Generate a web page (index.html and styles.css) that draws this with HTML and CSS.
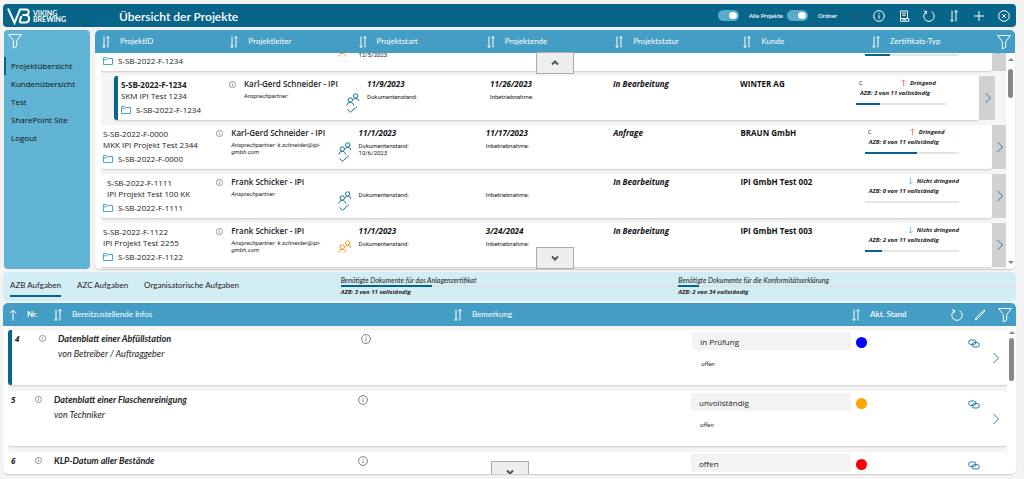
FILE: index.html
```html
<!DOCTYPE html>
<html lang="de">
<head>
<meta charset="utf-8">
<meta name="viewport" content="width=device-width, initial-scale=1">
<title>Übersicht der Projekte</title>
<link rel="stylesheet" href="styles.css">
</head>
<body>
<svg class="sprite" aria-hidden="true">
  <symbol id="sort" viewBox="0 0 8 12"><path d="M2 .5v11M.3 9.700 2 11.500l1.700-1.800M6 11.500V.5M4.300 2.300 6 .5l1.700 1.800"/></symbol>
  <symbol id="up" viewBox="0 0 8 12"><path d="M4 11.500V1M.8 4.200 4 1l3.200 3.200"/></symbol>
  <symbol id="info" viewBox="0 0 12 12"><circle cx="6" cy="6" r="5.300"/><path d="M6 5.200v3.600M6 3v1.200"/></symbol>
  <symbol id="funnel" viewBox="0 0 16 16"><path d="M1.500 1.500h13L9.700 7.500v5.700L6.300 15V7.500z"/></symbol>
  <symbol id="doc" viewBox="0 0 12 12"><path d="M2.500 1h7v7.500M2.500 1v10.200h8.300V8.500H2.500M4.200 3.200h3.600M4.200 5.200h3.600M4.500 9.800h4"/></symbol>
  <symbol id="refresh" viewBox="0 0 12 12"><path d="M3.500 1.600A5.200 5.200 0 1 0 8.500 1.600M1 .9l2.700.6-.7 2.700"/></symbol>
  <symbol id="plus" viewBox="0 0 12 12"><path d="M6 1v10M1 6h10"/></symbol>
  <symbol id="close" viewBox="0 0 12 12"><circle cx="6" cy="6" r="5.300"/><path d="m4 4 4 4M8 4 4 8"/></symbol>
  <symbol id="pencil" viewBox="0 0 12 12"><path d="m1.200 10.800.6-1.800 8.300-8 .9.900-8 8.300z"/></symbol>
  <symbol id="folder" viewBox="0 0 10 8"><path d="M.5 7.500v-7h3l1 1h5v6zM.5 2.800h3.200l.8-1.300"/></symbol>
  <symbol id="people" viewBox="0 0 14 13"><circle cx="9.700" cy="3" r="2.200"/><path d="M7.300 6.800c.8-1.800 4.700-2.400 5.600 1.200"/><circle cx="4.300" cy="7" r="2.200"/><path d="M.8 12.500c.4-4.200 6.500-4.200 7 0"/></symbol>
  <symbol id="check" viewBox="0 0 14 7"><path d="m1.500 3.500 3 2.800L11 .5"/></symbol>
  <symbol id="right" viewBox="0 0 8 12"><path d="m1.500 1 5 5-5 5"/></symbol>
  <symbol id="chev-up" viewBox="0 0 8 6"><path d="m1 4.500 3-3 3 3"/></symbol>
  <symbol id="chev-down" viewBox="0 0 8 6"><path d="m1 1.500 3 3 3-3"/></symbol>
  <symbol id="link" viewBox="0 0 12 9"><rect x=".6" y="1" width="7.400" height="4.400" rx="2.200"/><rect x="4" y="3.600" width="7.400" height="4.400" rx="2.200"/></symbol>
</svg>

<div class="app">
  <header class="topbar">
    <div class="brand">
      <svg class="brand-mark" viewBox="0 0 24 18" aria-hidden="true"><path d="M1 1.500 7.500 16 13 2.500h6.500c3 0 3 5.500-.5 5.500h-3.500M19 8c4.500.3 4 7.500-.5 7.500h-4.500q-1.500 0-1-2.500l1.500-4"/></svg>
      <span class="brand-name">VIKING<br>BREWING</span>
    </div>
    <h1>Übersicht der Projekte</h1>
    <label class="toggle"><input type="checkbox" role="switch" checked><span>Alle Projekte</span></label>
    <label class="toggle"><input type="checkbox" role="switch" checked><span>Ordner</span></label>
    <nav class="tools" aria-label="Werkzeuge">
      <button class="dim" aria-label="Hinweis" disabled><svg class="icon"><use href="#info"/></svg></button>
      <button aria-label="Information"><svg class="icon"><use href="#info"/></svg></button>
      <button aria-label="Bericht"><svg class="icon"><use href="#doc"/></svg></button>
      <button aria-label="Aktualisieren"><svg class="icon"><use href="#refresh"/></svg></button>
      <button aria-label="Sortieren"><svg class="icon"><use href="#sort"/></svg></button>
      <button aria-label="Neu"><svg class="icon"><use href="#plus"/></svg></button>
      <button aria-label="Schließen"><svg class="icon"><use href="#close"/></svg></button>
    </nav>
  </header>

  <main class="upper">
    <aside class="sidebar">
      <button class="filter" aria-label="Filter"><svg class="funnel"><use href="#funnel"/></svg></button>
      <nav>
        <a class="current" href="#">Projektübersicht</a>
        <a href="#">Kundenübersicht</a>
        <a href="#">Test</a>
        <a href="#">SharePoint Site</a>
        <a href="#">Logout</a>
      </nav>
    </aside>

    <section class="panel projects" aria-label="Projekte">
      <div class="panel-head project-head">
        <button><svg class="sort"><use href="#sort"/></svg>ProjektID</button>
        <button><svg class="sort"><use href="#sort"/></svg>Projektleiter</button>
        <button><svg class="sort"><use href="#sort"/></svg>Projektstart</button>
        <button><svg class="sort"><use href="#sort"/></svg>Projektende</button>
        <button><svg class="sort"><use href="#sort"/></svg>Projektstatur</button>
        <button><svg class="sort"><use href="#sort"/></svg>Kunde</button>
        <button><svg class="sort"><use href="#sort"/></svg>Zertifikats-Typ</button>
        <button class="filter" aria-label="Filter"><svg class="funnel"><use href="#funnel"/></svg></button>
      </div>
      <div class="scroll-area">
        <ul class="project-list">
          <li class="project">
            <div class="card">
              <div class="cell id-cell"><div class="ids"><p></p><p></p><p class="folder"><svg><use href="#folder"/></svg>S-SB-2022-F-1234</p></div></div>
              <div class="cell lead-cell"><div></div><span class="people pending"><svg><use href="#people"/></svg></span></div>
              <div class="cell"><p class="strong"></p><p class="note"><br>12/5/2023</p></div>
              <div class="cell"></div><div class="cell"></div><div class="cell"></div>
              <div class="cell cert"><p class="urgency"></p><p class="count"></p><div class="bar"><i style="width:27%"></i></div></div>
            </div>
            <button class="open" aria-label="Öffnen"><svg><use href="#right"/></svg></button>
          </li>
          <li class="project selected">
            <div class="card">
              <div class="cell id-cell"><div class="ids"><p><b>S-SB-2022-F-1234</b></p><p>SKM IPI Test 1234</p><p class="folder"><svg><use href="#folder"/></svg>S-SB-2022-F-1234</p></div><svg class="mini-info"><use href="#info"/></svg></div>
              <div class="cell lead-cell"><div><p class="lead">Karl-Gerd Schneider - IPI</p><p class="contact">Ansprechpartner:</p></div><span class="people"><svg><use href="#people"/></svg><svg class="check"><use href="#check"/></svg></span></div>
              <div class="cell"><p class="strong">11/9/2023</p><p class="note">Dokumentenstand:</p></div>
              <div class="cell"><p class="strong">11/26/2023</p><p class="note">Inbetriebnahme:</p></div>
              <div class="cell"><p class="strong">In Bearbeitung</p></div>
              <div class="cell"><p class="client">WINTER AG</p></div>
              <div class="cell cert"><p class="urgency"><span>C</span><svg class="high"><use href="#up"/></svg><em>Dringend</em></p><p class="count">AZB: 3 von 11 vollständig</p><div class="bar"><i style="width:27%"></i></div></div>
            </div>
            <button class="open" aria-label="Öffnen"><svg><use href="#right"/></svg></button>
          </li>
          <li class="project">
            <div class="card">
              <div class="cell id-cell"><div class="ids"><p>S-SB-2022-F-0000</p><p>MKK IPI Projekt Test 2344</p><p class="folder"><svg><use href="#folder"/></svg>S-SB-2022-F-0000</p></div><svg class="mini-info"><use href="#info"/></svg></div>
              <div class="cell lead-cell"><div><p class="lead">Karl-Gerd Schneider - IPI</p><p class="contact">Ansprechpartner: k.schneider@ipi-<br>gmbh.com</p></div><span class="people"><svg><use href="#people"/></svg><svg class="check"><use href="#check"/></svg></span></div>
              <div class="cell"><p class="strong">11/1/2023</p><p class="note">Dokumentenstand:<br>10/6/2023</p></div>
              <div class="cell"><p class="strong">11/17/2023</p><p class="note">Inbetriebnahme:</p></div>
              <div class="cell"><p class="strong">Anfrage</p></div>
              <div class="cell"><p class="client">BRAUN GmbH</p></div>
              <div class="cell cert"><p class="urgency"><span>C</span><svg class="high"><use href="#up"/></svg><em>Dringend</em></p><p class="count">AZB: 6 von 11 vollständig</p><div class="bar"><i style="width:55%"></i></div></div>
            </div>
            <button class="open" aria-label="Öffnen"><svg><use href="#right"/></svg></button>
          </li>
          <li class="project">
            <div class="card">
              <div class="cell id-cell"><div class="ids"><p class="indent">S-SB-2022-F-1111</p><p class="indent">IPI Projekt Test 100 KK</p><p class="folder"><svg><use href="#folder"/></svg>S-SB-2022-F-1111</p></div><svg class="mini-info"><use href="#info"/></svg></div>
              <div class="cell lead-cell"><div><p class="lead">Frank Schicker - IPI</p><p class="contact">Ansprechpartner:</p></div><span class="people"><svg><use href="#people"/></svg><svg class="check"><use href="#check"/></svg></span></div>
              <div class="cell"><p class="strong"></p><p class="note">Dokumentenstand:</p></div>
              <div class="cell"><p class="strong"></p><p class="note">Inbetriebnahme:</p></div>
              <div class="cell"><p class="strong">In Bearbeitung</p></div>
              <div class="cell"><p class="client">IPI GmbH Test 002</p></div>
              <div class="cell cert"><p class="urgency"><span></span><svg class="low"><use href="#up"/></svg><em>Nicht dringend</em></p><p class="count">AZB: 0 von 11 vollständig</p><div class="bar"></div></div>
            </div>
            <button class="open" aria-label="Öffnen"><svg><use href="#right"/></svg></button>
          </li>
          <li class="project">
            <div class="card">
              <div class="cell id-cell"><div class="ids"><p>S-SB-2022-F-1122</p><p>IPI Projekt Test 2255</p><p class="folder"><svg><use href="#folder"/></svg>S-SB-2022-F-1122</p></div><svg class="mini-info"><use href="#info"/></svg></div>
              <div class="cell lead-cell"><div><p class="lead">Frank Schicker - IPI</p><p class="contact">Ansprechpartner: k.schneider@ipi-<br>gmbh.com</p></div><span class="people pending"><svg><use href="#people"/></svg></span></div>
              <div class="cell"><p class="strong">11/1/2023</p><p class="note">Dokumentenstand:</p></div>
              <div class="cell"><p class="strong">3/24/2024</p><p class="note">Inbetriebnahme:</p></div>
              <div class="cell"><p class="strong">In Bearbeitung</p></div>
              <div class="cell"><p class="client">IPI GmbH Test 003</p></div>
              <div class="cell cert"><p class="urgency"><span></span><svg class="low"><use href="#up"/></svg><em>Nicht dringend</em></p><p class="count">AZB: 2 von 11 vollständig</p><div class="bar"><i style="width:18%"></i></div></div>
            </div>
            <button class="open" aria-label="Öffnen"><svg><use href="#right"/></svg></button>
          </li>
        </ul>
        <div class="scrollbar" aria-hidden="true"><span class="arrow-up"></span><span class="thumb"></span><span class="arrow-down"></span></div>
        <button class="page-button top" aria-label="Nach oben"><svg><use href="#chev-up"/></svg></button>
        <button class="page-button bottom" aria-label="Nach unten"><svg><use href="#chev-down"/></svg></button>
      </div>
    </section>
  </main>

  <section class="tabs">
    <div class="tab-list" role="tablist">
      <button role="tab" aria-selected="true">AZB Aufgaben</button>
      <button role="tab" aria-selected="false">AZC Aufgaben</button>
      <button role="tab" aria-selected="false">Organisatorische Aufgaben</button>
    </div>
    <div class="progress"><p class="caption">Benötigte Dokumente für das Anlagenzertifikat</p><div class="track"><i style="width:27%"></i></div><p class="total">AZB: 3 von 11 vollständig</p></div>
    <div class="progress"><p class="caption">Benötigte Dokumente für die Konformitätserklärung</p><div class="track"><i style="width:6%"></i></div><p class="total">AZB: 2 von 34 vollständig</p></div>
  </section>

  <section class="panel tasks" aria-label="Aufgaben">
    <div class="panel-head task-head">
      <button class="number"><svg class="sort"><use href="#up"/></svg><b>Nr.</b></button>
      <button><svg class="sort"><use href="#sort"/></svg>Bereitzustellende Infos</button>
      <button><svg class="sort"><use href="#sort"/></svg>Bemerkung</button>
      <button><svg class="sort"><use href="#sort"/></svg><span class="medium">Akt. Stand</span></button>
      <div class="task-tools">
        <button aria-label="Aktualisieren"><svg class="icon"><use href="#refresh"/></svg></button>
        <button aria-label="Bearbeiten"><svg class="icon"><use href="#pencil"/></svg></button>
        <button aria-label="Filter"><svg class="funnel"><use href="#funnel"/></svg></button>
      </div>
    </div>
    <div class="scroll-area">
      <ul class="task-list">
        <li class="task selected">
          <b class="nr">4</b><svg class="mini-info"><use href="#info"/></svg>
          <div class="task-text"><h2>Datenblatt einer Abfüllstation</h2><p>von Betreiber / Auftraggeber</p></div>
          <svg class="remark"><use href="#info"/></svg>
          <div class="state"><select aria-label="Status 4"><option>in Prüfung</option></select><p>offen</p></div>
          <span class="dot blue"></span>
          <button class="link" aria-label="Verknüpfung"><svg><use href="#link"/></svg></button>
          <button class="next" aria-label="Öffnen"><svg><use href="#right"/></svg></button>
        </li>
        <li class="task">
          <b class="nr">5</b><svg class="mini-info"><use href="#info"/></svg>
          <div class="task-text"><h2>Datenblatt einer Flaschenreinigung</h2><p>von Techniker</p></div>
          <svg class="remark"><use href="#info"/></svg>
          <div class="state"><select aria-label="Status 5"><option>unvollständig</option></select><p>offen</p></div>
          <span class="dot orange"></span>
          <button class="link" aria-label="Verknüpfung"><svg><use href="#link"/></svg></button>
          <button class="next" aria-label="Öffnen"><svg><use href="#right"/></svg></button>
        </li>
        <li class="task">
          <b class="nr">6</b><svg class="mini-info"><use href="#info"/></svg>
          <div class="task-text"><h2>KLP-Datum aller Bestände</h2></div>
          <svg class="remark"><use href="#info"/></svg>
          <div class="state"><select aria-label="Status 6"><option>offen</option></select></div>
          <span class="dot red"></span>
          <button class="link" aria-label="Verknüpfung"><svg><use href="#link"/></svg></button>
        </li>
      </ul>
      <div class="scrollbar long" aria-hidden="true"><span class="arrow-up"></span><span class="thumb"></span></div>
      <button class="page-button clipped" aria-label="Nach unten"><svg><use href="#chev-down"/></svg></button>
    </div>
  </section>
</div>
</body>
</html>
```

FILE: styles.css
```css
* { box-sizing: border-box; }

body {
  margin: 0;
  background: #f3f3f3;
  color: #222;
  font-family: "Open Sans", "Noto Sans", sans-serif;
  font-size: 8px;
  line-height: 11px;
}

h1, h2, p, ul { margin: 0; padding: 0; }
ul { list-style: none; }
a { color: inherit; text-decoration: none; }

button, select {
  margin: 0;
  padding: 0;
  border: 0;
  background: none;
  color: inherit;
  font: inherit;
}

svg {
  display: block;
  flex: none;
  fill: none;
  stroke: currentColor;
}

.sprite { position: absolute; width: 0; height: 0; }

.app {
  display: grid;
  grid-template-rows: 24px minmax(0, 239fr) 30px minmax(0, 171fr);
  row-gap: 2px;
  height: 100vh;
  padding: 4px 8px 5px 3px;
}

.icon { width: 12px; height: 12px; }
.sort { width: 8px; height: 12px; }
.funnel { width: 16px; height: 16px; }

/* Top bar */
.topbar {
  display: flex;
  align-items: center;
  height: 23px;
  border-radius: 4px;
  background: #08658a;
  color: #fff;
}

.brand {
  display: flex;
  align-items: center;
  gap: 2px;
  width: 116px;
  padding-left: 4px;
}

.brand-mark { width: 24px; height: 18px; stroke-width: 2; }

.brand-name {
  font-family: Lato, sans-serif;
  font-size: 7px;
  font-weight: 700;
  line-height: 6px;
}

h1 {
  flex: 1;
  padding-top: 2px;
  font-family: Lato, sans-serif;
  font-size: 12px;
  font-weight: 600;
  line-height: 16px;
}

.toggle {
  display: flex;
  align-items: center;
  gap: 10px;
  width: 69px;
  font-family: Lato, sans-serif;
  font-size: 6px;
  font-weight: 600;
}

.toggle input {
  appearance: none;
  display: flex;
  flex: none;
  justify-content: flex-end;
  width: 21px;
  height: 11px;
  margin: 0;
  padding: 2px;
  border-radius: 6px;
  background: #5aabcb;
}

.toggle input::before {
  content: "";
  width: 8px;
  height: 7px;
  border-radius: 50%;
  background: #fff;
}

.toggle + .toggle { width: 57px; }
.tools { display: flex; }
.tools button { display: grid; place-items: center; width: 25px; height: 23px; }
.tools .dim { width: 22px; color: #2f5568; }
.tools .dim svg { width: 10px; height: 10px; }

/* Sidebar and project panel */
.upper {
  display: grid;
  grid-template-columns: 86px minmax(0, 1fr);
  gap: 5px;
  padding: 0 1px;
}

.sidebar {
  padding-top: 3px;
  border-radius: 4px;
  background: #60b3d2;
}

.sidebar .filter { display: block; margin: 0 0 8px 3px; color: #fff; }
.sidebar a { display: block; padding: 3px 7px 4px; color: #111; }
.sidebar .current { box-shadow: inset 2px 0 #08658a; }

.panel {
  display: flex;
  flex-direction: column;
  overflow: hidden;
  border-radius: 5px;
  background: #fff;
  box-shadow: 0 1px 1px #ccc;
}

.panel-head {
  display: grid;
  flex: none;
  align-items: center;
  height: 23px;
  background: #449dc4;
  color: #fff;
  font-family: Lato, sans-serif;
}

.panel-head button { display: flex; align-items: center; gap: 10px; text-align: left; }
.project-head { grid-template-columns: repeat(7, minmax(0, 1fr)) 22px; }
.project-head button { padding-left: 7px; }
.project-head .filter { padding-left: 3px; }

.scroll-area {
  position: relative;
  display: flex;
  flex: 1;
  min-height: 0;
}

.project-list {
  display: flex;
  flex: 1;
  flex-direction: column;
  justify-content: flex-end;
  gap: 5px;
  margin-left: 6px;
  padding-bottom: 2px;
  overflow: hidden;
  background: #f5f5f5;
}

.project { display: flex; flex: none; height: 44px; }
.project.selected { margin: 0 11px 0 13px; }

.card {
  display: grid;
  flex: 1;
  grid-template-columns: repeat(7, minmax(0, 1fr));
  border-radius: 3px;
  background: #fff;
  box-shadow: 0 1px 2px #ccc;
}

.selected .card { border-left: 4px solid #08658a; }
.cell { padding: 2px 0 0 3px; white-space: nowrap; }
.id-cell { display: flex; justify-content: space-between; padding: 3px 5px 0 2px; }
.selected .id-cell { padding-left: 3px; }
.ids p { min-height: 11px; }
.ids .indent { padding-left: 4px; }
.folder { display: flex; align-items: center; gap: 5px; padding-top: 3px; }
.folder svg { width: 10px; height: 8px; color: #4ba5c8; }
.mini-info { width: 7px; height: 7px; margin-top: 2px; color: #555; }
.lead-cell { display: flex; justify-content: space-between; padding-right: 4px; }
.lead, .client { font-weight: 600; }
.client { color: #111; font-weight: 700; }
.selected .client { padding-left: 4px; }
.strong { min-height: 11px; color: #111; font-style: italic; font-weight: 700; }

.contact, .note {
  padding-top: 3px;
  font-family: Roboto, sans-serif;
  font-size: 6px;
  line-height: 7px;
}

.contact { font-style: italic; }
.note { padding-top: 4px; }
.people { width: 14px; padding-top: 15px; color: #16739a; }
.people svg { width: 14px; height: 13px; }
.people .check { height: 7px; }
.people.pending { color: #f3961c; }

.cert { padding: 2px 33px 0 0; font-size: 6px; }
.urgency { display: flex; align-items: center; height: 10px; padding-left: 3px; }
.urgency span { width: 42px; }
.urgency svg { width: 5px; height: 8px; margin-right: 4px; }
.urgency em, .count { font-weight: 700; }
.high { color: #f04a3c; }
.low { color: #36a3dc; transform: rotate(180deg); }
.count { min-height: 10px; padding-left: 4px; font-style: italic; line-height: 10px; }
.bar { height: 2px; margin-top: 5px; background: #e4e4e4; }
.bar i, .track i { display: block; height: 2px; background: #08658a; }

.open {
  display: grid;
  place-items: center;
  width: 14px;
  padding-left: 2px;
  background: #d1d1d1;
  color: #277ca2;
}

.selected .open { width: 16px; }
.open svg, .next svg { width: 8px; height: 12px; }

.scrollbar {
  display: flex;
  flex-direction: column;
  align-items: center;
  gap: 8px;
  width: 9px;
  padding: 5px 0;
  background: #fff;
}

.scrollbar .thumb { width: 5px; height: 29px; border-radius: 3px; background: #888; }
.scrollbar.long { gap: 4px; }
.long .thumb { height: 43px; }

.arrow-up, .arrow-down {
  border: 3px solid transparent;
  border-top-width: 0;
  border-bottom: 3px solid #888;
}

.arrow-down { margin-top: auto; transform: rotate(180deg); }

.page-button {
  position: absolute;
  left: 50%;
  display: grid;
  place-items: center;
  width: 38px;
  height: 22px;
  margin-left: -19px;
  border: 1px solid #aaa;
  background: #eee;
  color: #555;
}

.page-button svg { width: 8px; height: 6px; stroke-width: 2; }
.top { top: -1px; }
.bottom { bottom: 0; }
.clipped { bottom: -9px; }

/* Tabs and document progress */
.tabs {
  display: grid;
  grid-template-columns: repeat(3, minmax(0, 1fr));
  margin-top: 1px;
  border-radius: 4px;
  background: #d3edf4;
}

.tab-list {
  display: flex;
  align-items: center;
  gap: 16px;
  padding-left: 7px;
  font-family: Lato, sans-serif;
}

.tab-list button { height: 20px; border-bottom: 2px solid transparent; white-space: nowrap; }
.tab-list [aria-selected="true"] { border-color: #08658a; }

.progress {
  padding-top: 3px;
  font-size: 6px;
  font-style: italic;
  line-height: 10px;
  white-space: nowrap;
}

.caption { font-family: Lato, sans-serif; font-size: 7px; }
.track { height: 2px; background: #dde3e6; }
.total { font-weight: 700; }

/* Tasks */
.task-head { grid-template-columns: 47px minmax(0, 400fr) minmax(0, 398fr) minmax(0, 94fr) 74px; }
.task-head > button { padding-left: 4px; }
.task-head .number { padding-left: 6px; }
.medium { font-weight: 600; }

.task-tools {
  display: flex;
  align-items: center;
  justify-content: space-between;
  padding: 0 3px 0 9px;
}

.task-list {
  flex: 1;
  margin-left: 5px;
  padding-top: 4px;
  overflow: hidden;
  background: #f5f5f5;
}

.task {
  display: grid;
  grid-template-columns: 27px 19px minmax(0, 304fr) minmax(0, 333fr) minmax(0, 160fr) minmax(0, 112fr) 22px 22px;
  align-items: start;
  height: 55px;
  margin-bottom: 6px;
  border-radius: 3px;
  background: #fff;
  box-shadow: 0 1px 2px #ccc;
}

.task.selected { border-left: 4px solid #08658a; }
.nr { padding: 3px; font-style: italic; }
.task .mini-info { margin-top: 5px; }

.task-text {
  display: grid;
  gap: 4px;
  padding-top: 3px;
  font-family: Lato, sans-serif;
  font-size: 9px;
  font-style: italic;
}

h2 { font-size: 9px; font-weight: 700; line-height: 11px; }
.remark { width: 10px; height: 10px; margin-top: 4px; color: #666; }

.state select {
  appearance: none;
  display: block;
  width: 100%;
  height: 18px;
  padding: 0 8px;
  border-radius: 2px;
  background: #f3f3f3;
}

.state { padding-top: 2px; }
.state p { padding: 8px 9px 0; font-family: Roboto, sans-serif; font-size: 6px; font-style: italic; }
.dot { width: 11px; height: 11px; margin: 7px 0 0 5px; border-radius: 50%; }
.blue { background: #00f; }
.orange { background: #ffa500; }
.red { background: #f00; }
.link, .next { display: grid; place-items: center; color: #277ca2; }
.link { padding-top: 9px; }
.link svg { width: 12px; height: 9px; }
.next { padding-top: 22px; }
```
